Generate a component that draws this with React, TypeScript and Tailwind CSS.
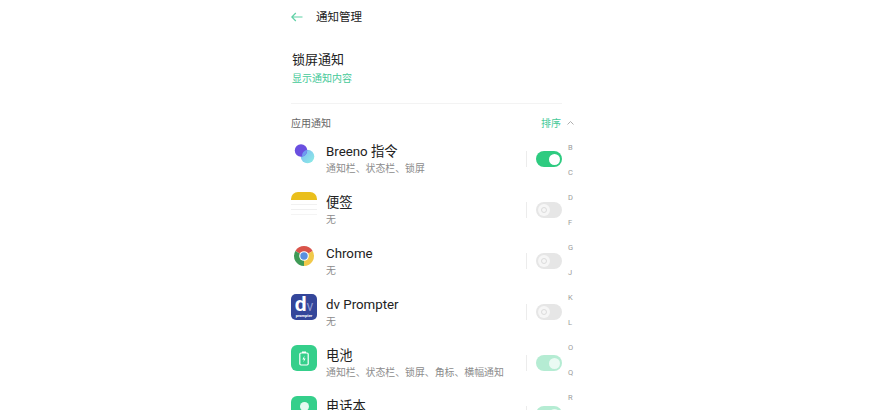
const fontStack = 'Roboto, "Noto Sans CJK SC", "Noto Sans", sans-serif';

type AppRow = {
  name: string;
  detail: string;
  state: 'on' | 'off' | 'soft';
  icon: React.ReactNode;
};

function BreenoIcon() {
  return (
    <svg width="22" height="22" viewBox="0 0 22 22">
      <defs>
        <linearGradient id="breeno-b" x1="0" y1="0" x2="1" y2="1">
          <stop offset="0" stopColor="#7fb8f5" />
          <stop offset="1" stopColor="#8df0e4" />
        </linearGradient>
      </defs>
      <circle cx="14.5" cy="13.5" r="6.8" fill="url(#breeno-b)" />
      <circle cx="8" cy="7.5" r="6.2" fill="#6a4fe0" />
      <path d="M9 13.6a6.2 6.2 0 0 0 5-6.8A6.8 6.8 0 0 0 9 13.6z" fill="#6f9cf0" />
    </svg>
  );
}

function NotesIcon() {
  return (
    <div className="flex h-[26px] w-[26px] flex-col overflow-hidden rounded-t-[7px]">
      <div className="h-[8px] bg-[#eabf1c]" />
      <div className="mt-[4px] h-px bg-[#f1f1f1]" />
      <div className="mt-[4px] h-px bg-[#efefef]" />
      <div className="mt-[4px] h-px bg-[#f4f4f4]" />
    </div>
  );
}

function ChromeIcon() {
  return (
    <svg width="20" height="20" viewBox="0 0 20 20">
      <path d="M10 10 1.34 5A10 10 0 0 1 18.66 5z" fill="#d9534a" />
      <path d="M10 10 18.66 5A10 10 0 0 1 10 20z" fill="#f1c94a" />
      <path d="M10 10 10 20A10 10 0 0 1 1.34 5z" fill="#3f9a56" />
      <circle cx="10" cy="10" r="4.8" fill="#fff" />
      <circle cx="10" cy="10" r="3.7" fill="#5a8fe0" />
    </svg>
  );
}

function PrompterIcon() {
  return (
    <div className="flex h-[26px] w-[26px] flex-col items-center rounded-[5px] bg-[#34469a] pt-[1px]">
      <div className="flex h-[19px] items-end">
        <span className="text-[21px] leading-[19px] font-bold text-white">d</span>
        <span className="text-[14px] leading-[16px] text-[#8f9bd0]">v</span>
      </div>
      <span className="text-[4px] leading-[4px] font-bold text-white">prompter</span>
    </div>
  );
}

function BatteryIcon() {
  return (
    <div className="flex h-[26px] w-[26px] items-center justify-center rounded-[6px] bg-[#35cf8b]">
      <svg width="12" height="15" viewBox="0 0 12 15" fill="none">
        <rect x="4" y="0.5" width="4" height="1.5" fill="#fff" />
        <rect x="1.8" y="2" width="8.4" height="12" rx="1.2" stroke="#fff" strokeWidth="1.2" />
        <path d="M6.6 4.6 4.4 8.4H6l-.6 2.8 2.2-3.8H6z" fill="#fff" />
      </svg>
    </div>
  );
}

function ContactsIcon() {
  return (
    <div className="flex h-[26px] w-[26px] items-start justify-center rounded-[6px] bg-[#35cf8b] pt-[6px]">
      <div className="h-[9px] w-[9px] rounded-full bg-[#e6f9f0]" />
    </div>
  );
}

const apps: AppRow[] = [
  { name: 'Breeno 指令', detail: '通知栏、状态栏、锁屏', state: 'on', icon: <BreenoIcon /> },
  { name: '便签', detail: '无', state: 'off', icon: <NotesIcon /> },
  { name: 'Chrome', detail: '无', state: 'off', icon: <ChromeIcon /> },
  { name: 'dv Prompter', detail: '无', state: 'off', icon: <PrompterIcon /> },
  { name: '电池', detail: '通知栏、状态栏、锁屏、角标、横幅通知', state: 'soft', icon: <BatteryIcon /> },
  { name: '电话本', detail: '通知栏、状态栏、锁屏', state: 'soft', icon: <ContactsIcon /> },
];

const letters = ['B', 'C', 'D', 'F', 'G', 'J', 'K', 'L', 'O', 'Q', 'R'];

function Toggle({ state }: { state: AppRow['state'] }) {
  if (state === 'off') {
    return (
      <div className="flex h-[16px] w-[26px] items-center rounded-full bg-[#e6e6e6] pl-[2px]">
        <div className="flex h-[12px] w-[12px] items-center justify-center rounded-full bg-[#f6f6f6]">
          <div className="h-[6px] w-[6px] rounded-full border border-[#dcdcdc]" />
        </div>
      </div>
    );
  }
  return (
    <div
      className={`flex h-[16px] w-[26px] items-center justify-end rounded-full pr-[2px] ${
        state === 'on' ? 'bg-[#2ecb80]' : 'bg-[#b5ecd3]'
      }`}
    >
      <div className={`h-[11px] w-[11px] rounded-full ${state === 'on' ? 'bg-white' : 'bg-[#eafaf3]'}`} />
    </div>
  );
}

export default function App() {
  return (
    <div className="h-[410px] w-[896px] overflow-hidden bg-white pl-[291px]" style={{ fontFamily: fontStack }}>
      <div className="w-[286px]">
        <header className="flex h-[34px] items-center">
          <svg width="12" height="10" viewBox="0 0 12 10" fill="none" stroke="#5fd1a6" strokeWidth="1.2">
            <path d="M11.5 5H.8M4.8 1 .8 5l4 4" />
          </svg>
          <h1 className="mt-[2px] ml-[13px] text-[11.5px] leading-none font-normal text-[#222]">通知管理</h1>
        </header>

        <section className="mt-[16px] w-[271px] border-b border-[#f3f3f3] pb-[17px]">
          <p className="pl-px text-[13px] leading-[19px] text-[#222]">锁屏通知</p>
          <p className="mt-[3px] pl-px text-[10px] leading-[14px] text-[#45c998]">显示通知内容</p>
        </section>

        <div className="mt-[13px] flex h-[14px] w-[284px] items-center text-[10px] leading-none">
          <span className="text-[#666]">应用通知</span>
          <span className="ml-auto text-[#45c998]">排序</span>
          <svg className="mb-[3px] ml-[5px]" width="9" height="6" viewBox="0 0 9 6" fill="none" stroke="#a5a5a5" strokeWidth="0.9">
            <path d="M1.5 4.5 4.5 1.5l3 3" />
          </svg>
        </div>

        <div className="flex">
          <ul className="w-[271px] shrink-0 pt-[6px]">
            {apps.map((app) => (
              <li key={app.name} className="flex h-[51px] shrink-0 items-start">
                <div className="flex h-[34px] w-[26px] items-center justify-center">{app.icon}</div>
                <div className="ml-[9px] min-w-0 flex-1 pt-[6px]">
                  <p className="text-[13.3px] leading-[18px] text-[#222]">{app.name}</p>
                  <p className="mt-[1px] text-[9.9px] leading-[14px] whitespace-nowrap text-[#8c8c8c]">{app.detail}</p>
                </div>
                <div className="mt-[14px] flex items-center">
                  <div className="h-[16px] w-px bg-[#ececec]" />
                  <div className="ml-[9px]">
                    <Toggle state={app.state} />
                  </div>
                </div>
              </li>
            ))}
          </ul>
          <ol className="ml-[6px] flex flex-col gap-[15px] pt-[12px] text-[7.5px] leading-[10px] text-[#9a9a9a]">
            {letters.map((letter) => (
              <li key={letter}>{letter}</li>
            ))}
          </ol>
        </div>
      </div>
    </div>
  );
}
